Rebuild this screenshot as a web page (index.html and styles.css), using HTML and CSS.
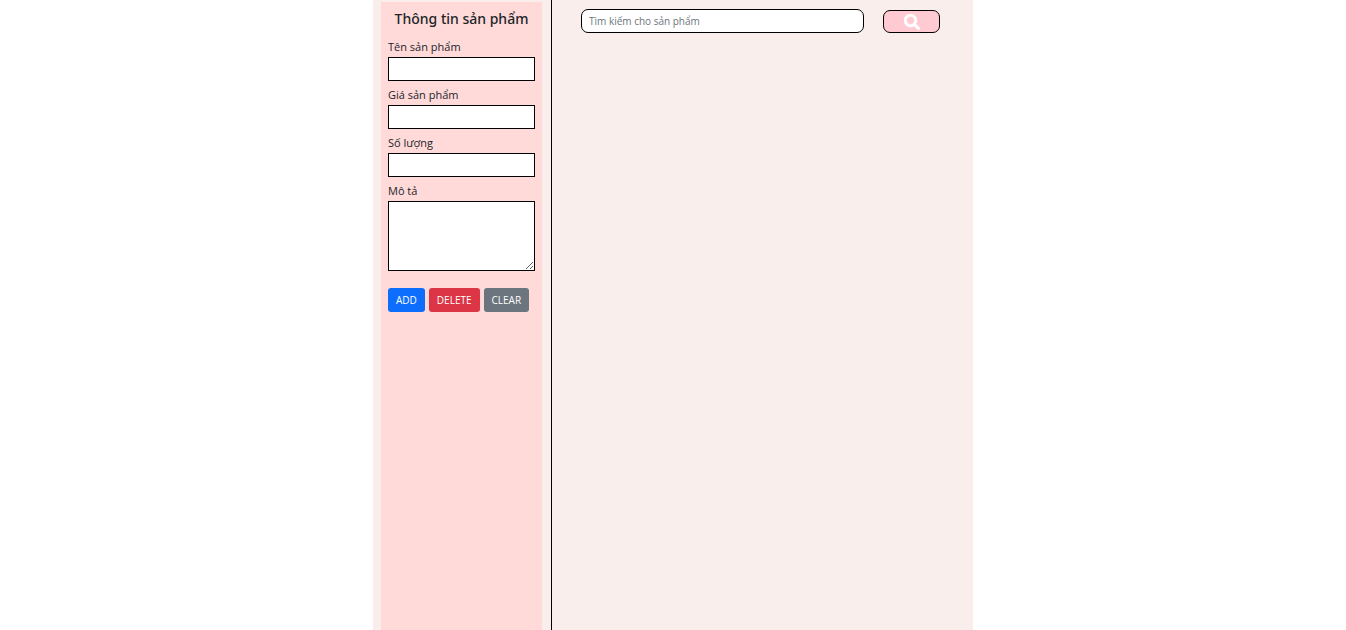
FILE: index.html
```html
<!DOCTYPE html>
<html lang="vi">
<head>
  <meta charset="utf-8">
  <meta name="viewport" content="width=device-width, initial-scale=1">
  <title>Thông tin sản phẩm</title>
  <link rel="stylesheet" href="styles.css">
</head>
<body>
  <div class="container">
    <aside class="sidebar">
      <form class="product-form">
        <h1 class="form-title">Thông tin sản phẩm</h1>
        <div class="field">
          <label class="field-label" for="name">Tên sản phẩm</label>
          <input class="field-input" id="name" type="text">
        </div>
        <div class="field">
          <label class="field-label" for="price">Giá sản phẩm</label>
          <input class="field-input" id="price" type="text">
        </div>
        <div class="field">
          <label class="field-label" for="quantity">Số lượng</label>
          <input class="field-input" id="quantity" type="text">
        </div>
        <div class="field">
          <label class="field-label" for="description">Mô tả</label>
          <textarea class="field-input field-textarea" id="description"></textarea>
        </div>
        <div class="actions">
          <button class="btn btn-add" type="button">ADD</button>
          <button class="btn btn-delete" type="button">DELETE</button>
          <button class="btn btn-clear" type="button">CLEAR</button>
        </div>
      </form>
    </aside>
    <main class="content">
      <form class="search" role="search">
        <input class="search-input" type="text" placeholder="Tìm kiếm cho sản phẩm" aria-label="Tìm kiếm cho sản phẩm">
        <button class="search-button" type="button" aria-label="Tìm kiếm">
          <svg class="search-icon" viewBox="0 0 512 512" aria-hidden="true">
            <path fill="currentColor" stroke="currentColor" stroke-width="16" d="M505 442.700L405.300 343c-4.500-4.500-10.600-7-17-7H372c27.600-35.300 44-79.700 44-128C416 93.100 322.900 0 208 0S0 93.100 0 208s93.100 208 208 208c48.300 0 92.700-16.400 128-44v16.300c0 6.400 2.500 12.500 7 17l99.700 99.700c9.400 9.400 24.600 9.400 33.900 0l28.300-28.300c9.400-9.400 9.400-24.600.1-34zM208 336c-70.700 0-128-57.200-128-128 0-70.700 57.200-128 128-128 70.700 0 128 57.200 128 128 0 70.700-57.200 128-128 128z"/>
          </svg>
        </button>
      </form>
    </main>
  </div>
</body>
</html>
```
FILE: styles.css
```css
* {
  box-sizing: border-box;
}

body {
  margin: 0;
  background: #fff;
  color: #212529;
  font-family: "Segoe UI", "Open Sans", "Noto Sans", sans-serif;
  font-size: 11px;
}

.container {
  display: grid;
  grid-template-columns: 3fr 7fr;
  max-width: 600px;
  min-height: 100vh;
  margin: 0 auto;
  background: #faeeec;
}

.sidebar {
  display: flex;
  padding: 2px 9px 0 8px;
  margin-right: 1px;
  border-right: 1px solid #000;
}

.product-form {
  flex: 1;
  min-width: 0;
  padding: 7px;
  background: #ffdad9;
}

.form-title {
  margin: 0 0 8px;
  font-family: "Segoe UI", "Noto Sans", sans-serif;
  font-size: 14px;
  font-weight: 500;
  line-height: 20px;
  text-align: center;
  white-space: nowrap;
}

.field {
  margin-bottom: 4px;
}

.field-label {
  display: block;
  line-height: 20px;
}

.field-input {
  display: block;
  width: 100%;
  height: 24px;
  padding: 2px 6px;
  border: 1px solid #000;
  border-radius: 0;
  background: #fff;
  font: inherit;
}

.field-textarea {
  height: 70px;
  resize: vertical;
}

.actions {
  display: flex;
  gap: 4px;
  margin-top: 17px;
}

.btn {
  height: 24px;
  padding: 0 8px;
  border: 0;
  border-radius: 3px;
  color: #fff;
  font-family: inherit;
  font-size: 10px;
}

.btn-add {
  background: #0d6efd;
}

.btn-delete {
  background: #dc3545;
}

.btn-clear {
  background: #6c757d;
}

.content {
  padding: 9px 33px 0 28px;
}

.search {
  display: flex;
  align-items: flex-end;
  gap: 19px;
}

.search-input {
  flex: 1;
  min-width: 0;
  height: 24px;
  padding: 0 7px;
  border: 1px solid #000;
  border-radius: 7px;
  background: #fff;
  font-family: inherit;
  font-size: 10px;
}

.search-input::placeholder {
  color: #6c757d;
  opacity: 1;
}

.search-button {
  display: flex;
  align-items: center;
  justify-content: center;
  width: 57px;
  height: 23px;
  padding: 0;
  border: 1px solid #000;
  border-radius: 7px;
  background: #ffcad1;
  color: #fff;
}

.search-icon {
  width: 16px;
  height: 16px;
}
```
